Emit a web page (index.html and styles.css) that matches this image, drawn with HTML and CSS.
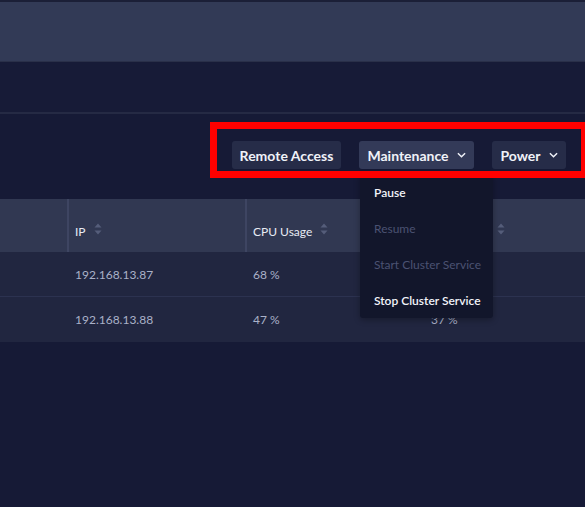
FILE: index.html
```html
<!DOCTYPE html>
<html>
<head>
<meta charset="utf-8">
<link rel="stylesheet" href="styles.css">
</head>
<body>
<div class="topbar"></div>
<div class="subbar"></div>
<div class="toolbar">
  <button class="btn btn-remote">Remote Access</button>
  <div class="menu-wrap">
    <button class="btn btn-active btn-maint">Maintenance <svg class="chev" viewBox="0 0 10 6" width="9" height="6"><path d="M1 1l4 4 4-4" fill="none" stroke="currentColor" stroke-width="1.6"/></svg></button>
    <div class="menu">
      <div class="menu-item">Pause</div>
      <div class="menu-item disabled">Resume</div>
      <div class="menu-item disabled">Start Cluster Service</div>
      <div class="menu-item">Stop Cluster Service</div>
    </div>
  </div>
  <button class="btn btn-power">Power <svg class="chev" viewBox="0 0 10 6" width="9" height="6"><path d="M1 1l4 4 4-4" fill="none" stroke="currentColor" stroke-width="1.6"/></svg></button>
</div>
<div class="table">
  <div class="row head">
    <div class="cell c1"></div>
    <div class="cell c2 sep">IP <svg class="sort" viewBox="0 0 8 12" width="8" height="12"><path d="M4 0.5L7.5 4.5H0.5Z M4 11.5L7.5 7.5H0.5Z" fill="currentColor"/></svg></div>
    <div class="cell c3 sep">CPU Usage <svg class="sort" viewBox="0 0 8 12" width="8" height="12"><path d="M4 0.5L7.5 4.5H0.5Z M4 11.5L7.5 7.5H0.5Z" fill="currentColor"/></svg></div>
    <div class="cell c4 sep">Disk Usage <svg class="sort" viewBox="0 0 8 12" width="8" height="12"><path d="M4 0.5L7.5 4.5H0.5Z M4 11.5L7.5 7.5H0.5Z" fill="currentColor"/></svg></div>
    <div class="cell c5 sep"></div>
  </div>
  <div class="row body-row">
    <div class="cell c1"></div>
    <div class="cell c2">192.168.13.87</div>
    <div class="cell c3">68 %</div>
    <div class="cell c4"></div>
    <div class="cell c5"></div>
  </div>
  <div class="row body-row">
    <div class="cell c1"></div>
    <div class="cell c2">192.168.13.88</div>
    <div class="cell c3">47 %</div>
    <div class="cell c4">37 %</div>
    <div class="cell c5"></div>
  </div>
</div>
<div class="highlight"></div>
</body>
</html>
```
FILE: styles.css
```css
html, body {
  margin: 0;
  padding: 0;
  overflow: hidden;
  height: 100%;
}
body {
  background: #161a36;
  font-family: "Lato", "Noto Sans", sans-serif;
  color: #e6e9f2;
  position: relative;
}
.topbar {
  height: 59px;
  background: #323a56;
  border-top: 2px solid #1b1f37;
  border-bottom: 1px solid #2a3049;
}
.subbar {
  height: 50px;
  background: #171b37;
  border-bottom: 2px solid #252a44;
}
.toolbar {
  height: 85px;
  box-sizing: border-box;
  padding: 27px 19px 0 0;
  display: flex;
  justify-content: flex-end;
  align-items: flex-start;
  gap: 18px;
}
.btn {
  height: 28px;
  border: none;
  border-radius: 3px;
  background: #262c48;
  color: #f0f2f8;
  font-family: inherit;
  font-weight: 700;
  font-size: 14px;
  padding: 0;
  display: flex;
  align-items: center;
  justify-content: center;
  gap: 8px;
  cursor: pointer;
  white-space: nowrap;
}
.btn-remote { width: 109px; }
.btn-maint { width: 115px; }
.btn-power { width: 74px; }
.btn-active {
  background: #333a58;
}
.chev {
  display: block;
}
.menu-wrap {
  position: relative;
}
.menu {
  position: absolute;
  left: 1px;
  top: 33px;
  width: 133px;
  background: #12162b;
  border-radius: 3px;
  box-shadow: 0 2px 6px rgba(0,0,0,0.3);
  z-index: 5;
}
.menu-item {
  height: 36px;
  display: flex;
  align-items: center;
  padding-left: 14px;
  font-size: 12px;
  font-weight: 600;
  color: #f2f4fa;
  white-space: nowrap;
}
.menu-item.disabled {
  color: #4b5272;
  font-weight: 400;
}
.table {
  width: 100%;
}
.row {
  display: flex;
}
.head {
  height: 53px;
  background: #313852;
  color: #e8ebf4;
  font-size: 12px;
}
.body-row {
  height: 44px;
  background: #212640;
  color: #aab1c8;
  font-size: 12px;
}
.body-row + .body-row {
  border-top: 1px solid #2c3250;
  height: 45px;
}
.cell {
  flex: none;
  box-sizing: border-box;
  padding-left: 8px;
  display: flex;
  align-items: center;
  white-space: nowrap;
}
.head .cell {
  padding-top: 12px;
}
.c1 { width: 67px; }
.c2, .c3, .c4 { width: 178px; }
.c5 { flex: 1; }
.head .sep {
  border-left: 2px solid #3e4562;
  padding-left: 6px;
}
.sort {
  margin-left: 8px;
  margin-top: -5px;
  color: #555d7a;
}
.highlight {
  position: absolute;
  left: 210px;
  top: 122px;
  width: 364px;
  height: 42px;
  border: 7px solid #ff0000;
  z-index: 10;
}
```
